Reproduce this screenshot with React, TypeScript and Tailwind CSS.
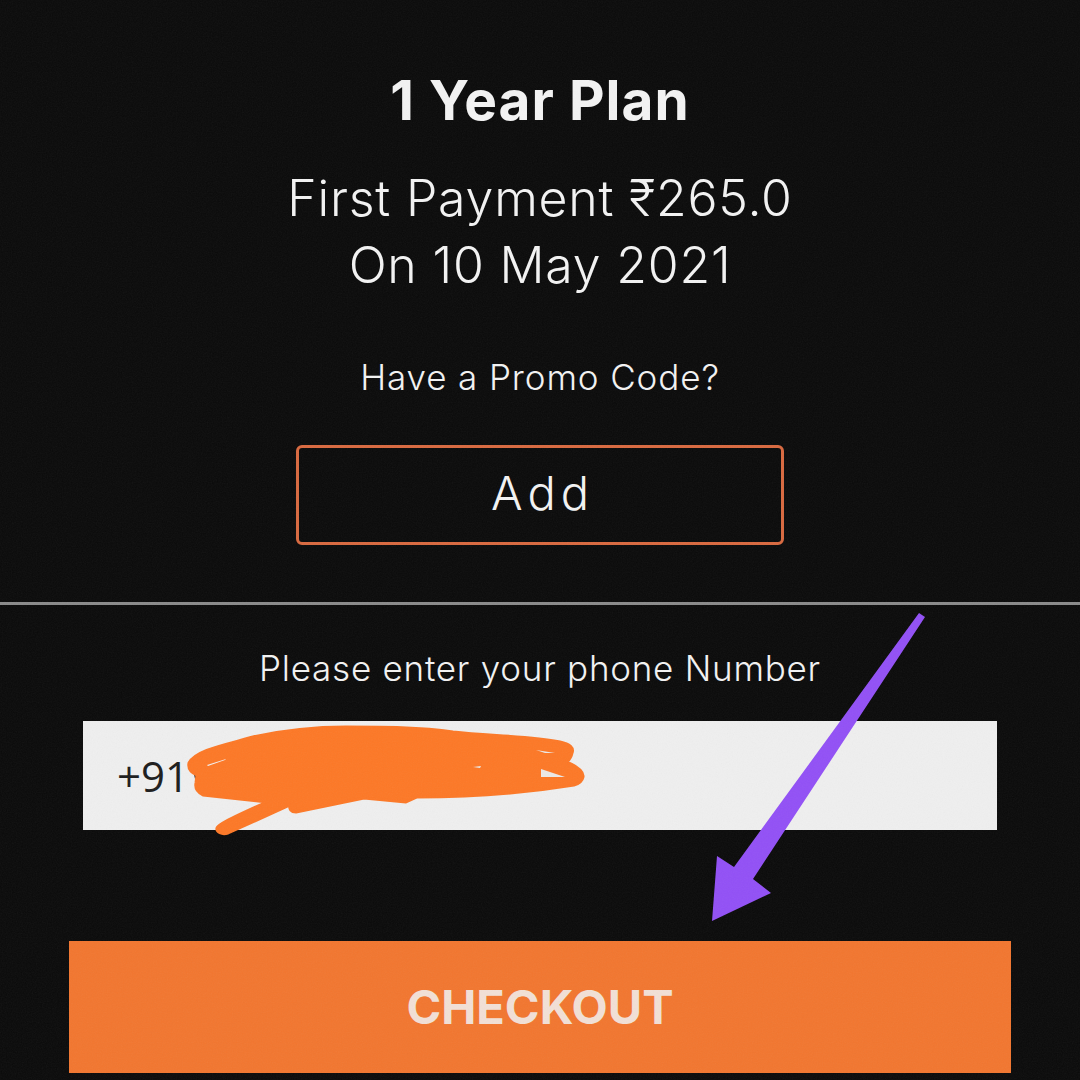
import React from 'react';

const fontStack = { fontFamily: '"Inter", "Lato", sans-serif' };

// marker scribble over the phone number
const Scribble: React.FC = () => (
  <svg className="absolute left-0 top-0" width="1080" height="1080" viewBox="0 0 1080 1080">
    <path d="M196 772 L199 785" stroke="#1c1c1c" strokeWidth="5" />
    <path
      d="M189 763 C196 750 225 745 253 737 C285 730 315 727 346 727 C385 727 420 727 453 732 C490 736 530 736 560 742 C570 744 574 748 572 753 C571 758 569 760 567 762 C576 766 584 771 583 777 C582 782 578 784 574 785 C525 793 470 797 417 797 L406 802 L364 798 L296 812 C291 812 289 809 290 805 L228 833 C222 835 216 832 217 828 C218 824 245 812 267 802 L203 795 C197 792 195 788 196 783 L197 775 C190 772 188 768 189 763 Z"
      fill="#fd7826"
      stroke="#fd7826"
      strokeWidth="3"
      strokeLinejoin="round"
    />
    <path d="M207 765 L226 759 L225 760 L208 766 Z" fill="#f4f0ee" />
    <path d="M541 769 L565 777 L541 777 Z" fill="#ece9e6" />
    <path d="M536 750 L555 753 L545 753 Z" fill="#ece9e6" />
    <path d="M473 767 L481 766 L480 768 Z" fill="#ece9e6" />
  </svg>
);

const Arrow: React.FC = () => (
  <svg className="absolute left-0 top-0" width="1080" height="1080" viewBox="0 0 1080 1080">
    <polygon points="919,613 925,617 753,879 771,893 712,921 717,856 734,867" fill="#9250f6" />
  </svg>
);

// photo grain that sits over the whole screenshot
const Grain: React.FC = () => (
  <svg className="absolute left-0 top-0 pointer-events-none opacity-[0.06]" width="1080" height="1080">
    <filter id="grain">
      <feTurbulence type="fractalNoise" baseFrequency="0.8" numOctaves="2" stitchTiles="stitch" />
      <feColorMatrix type="saturate" values="0" />
    </filter>
    <rect width="1080" height="1080" filter="url(#grain)" />
  </svg>
);

export default function App() {
  return (
    <div className="relative w-[1080px] h-[1080px] overflow-hidden bg-[#0a0a0a] text-[#f3f3f3]" style={fontStack}>
      <div className="flex flex-col items-center pt-[66px]">
        <h1 className="text-[55px] leading-[68px] tracking-[1px] font-bold">1 Year Plan</h1>
        <p className="mt-[31px] text-[50px] leading-[67px] tracking-[0.8px] text-center font-[350]">
          First Payment ₹265.0
          <br />
          On 10 May 2021
        </p>
        <p className="mt-[56px] text-[35px] leading-[44px] tracking-[0.9px] font-[350]">Have a Promo Code?</p>
        <button className="mt-[46px] w-[488px] h-[100px] rounded-[6px] border-[3px] border-[#d9693f] pl-[5px] pb-[4px] text-[47px] tracking-[5px] font-[350]">
          Add
        </button>
      </div>

      <div className="mt-[57px] h-[3px] bg-[#8a8a8a]" />

      <div className="flex flex-col items-center">
        <p className="mt-[41px] text-[35px] leading-[44px] tracking-[0.75px] font-[350]">Please enter your phone Number</p>
        <div className="mt-[31px] w-[914px] h-[109px] bg-[#efefef] flex items-center pl-[34px]">
          <span className="text-[42px] text-[#1c1c1c]" style={{ fontFamily: '"Open Sans", sans-serif' }}>+91</span>
        </div>
        <button className="mt-[111px] w-[942px] h-[132px] bg-[#f2762f] text-[47px] font-bold text-[#f2e0d6]">
          CHECKOUT
        </button>
      </div>

      <Scribble />
      <Arrow />
      <Grain />
    </div>
  );
}
